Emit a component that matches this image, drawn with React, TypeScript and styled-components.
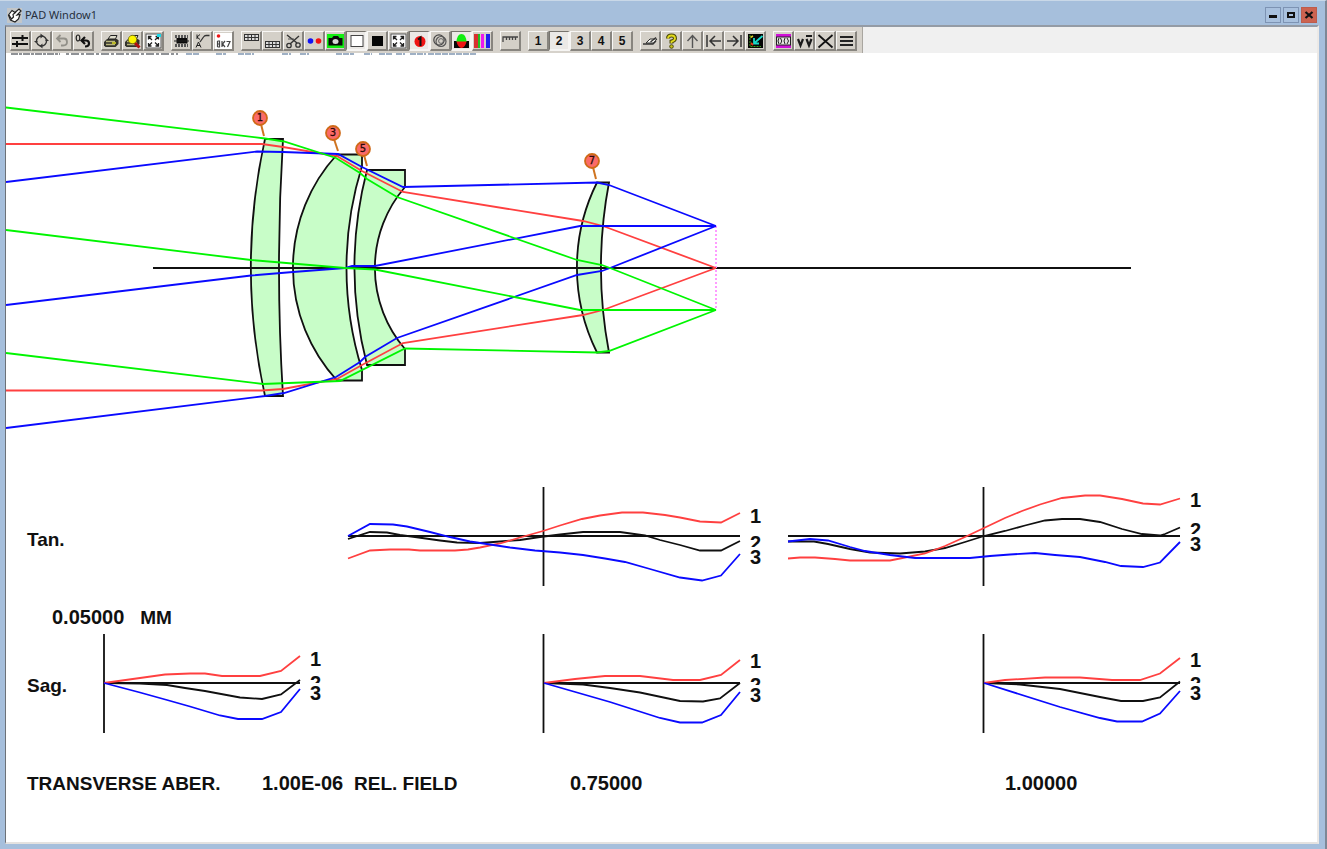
import React from "react";
import styled, { createGlobalStyle } from "styled-components";

const GlobalStyle = createGlobalStyle`
  * { box-sizing: border-box; }
  body { margin: 0; background: #a6bfdc; }
`;

const RED = "#ff4040";
const BLUE = "#0a0aff";
const GREEN = "#00f500";
const BLACK = "#101010";

/* ---------- window chrome ---------- */

const Window = styled.main`
  min-height: 100vh;
  display: flex;
  flex-direction: column;
  padding: 0 6px 5px 5px;
  background: #a6bfdc;
  border-top: 1px solid #c9d8e8;
  border-right: 2px solid #7d8896;
  font-family: "Liberation Sans", Arial, sans-serif;
`;

const TitleBar = styled.header`
  display: flex;
  align-items: center;
  height: 24px;
  padding: 4px 2px 0 2px;
  gap: 3px;
`;

const Title = styled.h1`
  flex: 1;
  margin: 0;
  font: 400 11px/16px "Noto Sans", "Open Sans", sans-serif;
  color: #26303c;
`;

const Caption = styled.div`
  display: flex;
  gap: 2px;
`;

const CaptionButton = styled.button<{ $close?: boolean }>`
  display: grid;
  place-items: center;
  width: 16px;
  height: 16px;
  padding: 0;
  border: 1px solid ${(p) => (p.$close ? "#bd5c4c" : "#7d93b3")};
  background: ${(p) => (p.$close ? "#cc6350" : "#a9c1de")};
`;

const Frame = styled.div`
  flex: 1;
  display: flex;
  flex-direction: column;
  border-top: 2px solid #949ba5;
  border-left: 1px solid #6d7278;
  border-right: 2px solid #ece9e6;
  border-bottom: 2px solid #e4e2e0;
  background: #fff;
`;

const ToolStrip = styled.div`
  display: flex;
  background: #f0f0f0;
`;

const Toolbar = styled.div`
  display: flex;
  gap: 7px;
  height: 26px;
  padding: 4px 5px 2px 4px;
  background: #d6d2cb;
  border-right: 1px solid #a9a6a0;
`;

const ToolGroup = styled.div`
  display: flex;
`;

const ToolButton = styled.button<{ $pressed?: boolean }>`
  display: grid;
  place-items: center;
  width: 21px;
  height: 20px;
  padding: 0;
  color: #111;
  font: 700 12px/16px "Liberation Sans", Arial, sans-serif;
  background: ${(p) => (p.$pressed ? "#ebe9e6" : "#d4d0c8")};
  border-style: solid;
  border-width: 1px 2px 2px 1px;
  border-color: ${(p) =>
    p.$pressed ? "#77746e #f6f5f3 #f6f5f3 #77746e" : "#f8f7f5 #88857f #88857f #f8f7f5"};
`;

const Icon = styled.svg`
  display: block;
  width: 17px;
  height: 16px;
`;

const Fringe = styled.svg`
  display: block;
  width: 480px;
  height: 2px;
`;

/* ---------- plot ---------- */

const Drawing = styled.svg`
  display: block;
  width: 100%;
  height: auto;
  min-width: 0;
`;

const ChartRow = styled.section`
  display: grid;
  grid-template-columns: 324fr 440fr 440fr 107fr;
`;

const LabelCell = styled.div`
  display: grid;
  grid-template-columns: 84fr 240fr;
  align-items: center;
`;

const RowLabel = styled.h2<{ $drop?: boolean }>`
  margin: 0;
  padding: ${(p) => (p.$drop ? "12px" : "2px")} 0 0 21px;
  font-size: 19px;
  line-height: 24px;
  color: ${BLACK};
`;

const Word = styled.span`
  font-size: 19px;
  line-height: 24px;
  font-weight: 700;
  color: ${BLACK};
  white-space: nowrap;
`;

const Value = styled(Word)`
  font-size: 20px;
`;

const ScaleRow = styled.p`
  display: flex;
  align-items: baseline;
  gap: 16px;
  margin: 11px 0 0;
  padding-left: 46px;
`;

const FieldRow = styled.footer`
  display: grid;
  grid-template-columns: 256fr 92fr 216fr 435fr 312fr;
  align-items: baseline;
  margin: 31px 0 24px;
`;

const Lead = styled(Word)`
  padding-left: 21px;
`;

/* ---------- toolbar icons ---------- */

const printer = (
  <>
    <path d="M1 9L4 6H14L15.500 7.500V11L12.500 14H2.500L1 12.500Z" fill="#33332c" />
    <path d="M5 6L7.500 2.500H14L12.500 6Z" fill="#dedccb" stroke="#222" />
    <path d="M3 8.500H12M3 11.500H12" stroke="#b9b57c" strokeWidth="1.300" />
    <path d="M9 10H13" stroke="#d8d820" strokeWidth="1.500" />
  </>
);

const fourArrows = (
  <>
    <rect x="1" y="1" width="15" height="14" fill="#fff" stroke="#555" />
    <path
      d="M7 7L4 4M10 7L13 4M7 9.500L4 12.500M10 9.500L13 12.500M3.500 6.500V3.500H6.500M10.500 3.500H13.500V6.500M3.500 10V13H6.500M10.500 13H13.500V10"
      fill="none"
      stroke="#222"
      strokeWidth="1.300"
    />
  </>
);

const grid = (y: number) => (
  <>
    <rect x="1.500" y={y} width="14" height="6" fill="#ddd" stroke="#333" />
    <path d={`M1.500 ${y + 3}H15.500M5 ${y}V${y + 6}M8.500 ${y}V${y + 6}M12 ${y}V${y + 6}`} stroke="#333" />
  </>
);

const icons: Record<string, React.ReactNode> = {
  "Change lens": (
    <path d="M0 5H16M0 11H16M10.500 2V8M5 8V14" stroke="#111" strokeWidth="2" fill="none" />
  ),
  Refresh: (
    <>
      <circle cx="8.500" cy="8" r="5" fill="none" stroke="#333" strokeWidth="1.400" />
      <path d="M7.500 0.500L10.500 3L7.500 5.500ZM9.500 10.500L6.500 13L9.500 15.500ZM1 8H5L3 10ZM12 8H16L14 6Z" fill="#333" />
    </>
  ),
  Undo: (
    <path d="M3 5.500H10Q13 5.500 13 9Q13 12.500 9 12.500H7M6.500 2L3 5.500L6.500 9" fill="none" stroke="#929089" strokeWidth="1.800" />
  ),
  "Undo all": (
    <>
      <ellipse cx="3" cy="5" rx="1.800" ry="3" fill="none" stroke="#222" strokeWidth="1.200" />
      <path d="M7 7.500H11Q14 7.500 14 10.500Q14 13.500 10 13.500M10 4L6.500 7.500L10 11" fill="none" stroke="#111" strokeWidth="2.200" />
    </>
  ),
  Print: printer,
  "Print preview": (
    <>
      {printer}
      <path d="M10.500 9.500L15.500 14.500" stroke="#b01010" strokeWidth="3" />
      <circle cx="8.500" cy="6.500" r="4.200" fill="#fdf500" stroke="#6d6a10" strokeWidth="0.800" />
    </>
  ),
  "Fit view": (
    <>
      {fourArrows}
      <rect x="12" y="1" width="4" height="3" fill="#18d8e8" />
    </>
  ),
  "Film strip": (
    <>
      <path d="M2 3.500H15M2 12.500H15" stroke="#555" strokeWidth="3" strokeDasharray="2 1" />
      <rect x="3.500" y="5" width="11" height="5.500" fill="#0b0b0b" />
      <path d="M1 8H16" stroke="#222" />
    </>
  ),
  "Ray curve": (
    <>
      <path d="M3 1.500V6M3 4L6 1.500M3 4L6 6.500M2 14.500L4.500 9L7 14.500M3 12.500H6" fill="none" stroke="#222" />
      <path d="M6 9L9.500 4Q10.500 2.500 12 2.500H15.500" fill="none" stroke="#333" strokeWidth="1.300" />
    </>
  ),
  Glass: (
    <>
      <rect width="17" height="16" fill="#fff" />
      <circle cx="3.500" cy="3" r="1.800" fill="#f01818" />
      <path d="M2.500 8V14M2.500 8H4.500V14H2.500M2.500 11H4.500M7 8V14M10 8L7.500 11L10 14M11.500 8.500H15L12.500 14" fill="none" stroke="#444" strokeWidth="1.200" />
    </>
  ),
  "Table above": grid(1.500),
  "Table below": grid(8.500),
  Cut: (
    <>
      <path d="M2 2L12 10M14 3L5 11" stroke="#333" strokeWidth="1.400" />
      <circle cx="4" cy="12.500" r="2.200" fill="none" stroke="#333" strokeWidth="1.300" />
      <circle cx="13" cy="12" r="2.200" fill="none" stroke="#333" strokeWidth="1.300" />
      <path d="M3 6H9" stroke="#555" />
    </>
  ),
  "Two dots": (
    <>
      <circle cx="4.500" cy="8" r="2.800" fill="#1212f5" />
      <circle cx="12.500" cy="8" r="2.800" fill="#f51212" />
    </>
  ),
  Snapshot: (
    <>
      <rect y="1" width="17" height="14" fill="#12ee12" />
      <path d="M1.500 5H5L6.500 3H11L12.500 5H15.500V12.500H1.500Z" fill="#0a0a0a" />
      <ellipse cx="8.500" cy="8.500" rx="3" ry="2.500" fill="#d8d8d8" />
    </>
  ),
  "White background": <rect x="3" y="2.500" width="12" height="11" fill="#fff" stroke="#444" />,
  "Black background": <rect x="3" y="3" width="11" height="10" fill="#050505" />,
  Expand: fourArrows,
  "Surface numbers": (
    <>
      <circle cx="9" cy="8.500" r="5.500" fill="#f01414" />
      <path d="M7 6.500L9.500 4.500V13" fill="none" stroke="#111" strokeWidth="2" />
    </>
  ),
  Rings: (
    <>
      <circle cx="7" cy="7" r="5.200" fill="none" stroke="#444" strokeWidth="1.200" />
      <circle cx="9" cy="8.500" r="5" fill="none" stroke="#555" strokeWidth="1.200" />
      <circle cx="9" cy="8" r="2.400" fill="none" stroke="#666" />
    </>
  ),
  "Fill lens": (
    <>
      <rect x="1" y="8" width="15" height="7" fill="#080808" />
      <path d="M3.500 9Q4 1 8.500 1Q13 1 13.500 9Z" fill="#10ee10" />
      <path d="M3.500 8.500H13.500Q12 15 8.500 15Q5 15 3.500 8.500Z" fill="#f01414" />
    </>
  ),
  Colors: (
    <>
      <rect x="0" y="1" width="4" height="14" fill="#d83030" />
      <rect x="4" y="1" width="2" height="14" fill="#20c020" />
      <rect x="7" y="1" width="3" height="14" fill="#ee18ee" />
      <rect x="12" y="1" width="4" height="14" fill="#2020f0" />
    </>
  ),
  Scale: <path d="M1 9V4H16M4.500 4V7M7.500 4V7M10.500 4V7M13.500 4V7" fill="none" stroke="#444" strokeWidth="1.300" />,
  Eraser: (
    <>
      <path d="M4 10L8 6H15L11.500 10Z" fill="#f4f4f0" stroke="#333" />
      <path d="M1 11H11L14 8M8.500 9L14 4.500" fill="none" stroke="#333" strokeWidth="1.300" />
    </>
  ),
  Help: (
    <>
      <path d="M5 5.500Q5 2.500 8.500 2.500Q12 2.500 12 5.500Q12 7.500 8.500 8.500V10.500" fill="none" stroke="#4c4a08" strokeWidth="4" />
      <path d="M5 5.500Q5 2.500 8.500 2.500Q12 2.500 12 5.500Q12 7.500 8.500 8.500V10" fill="none" stroke="#e2da1c" strokeWidth="1.800" />
      <circle cx="8.500" cy="13.500" r="1.800" fill="#c8c018" stroke="#4c4a08" />
    </>
  ),
  Up: <path d="M8.500 15V3M3.500 8L8.500 2.500L13.500 8" fill="none" stroke="#555" strokeWidth="1.400" />,
  First: <path d="M2 2V14M16 8H5M10 3L5 8L10 13" fill="none" stroke="#333" strokeWidth="1.500" />,
  Last: <path d="M15 2V14M1 8H12M7 3L12 8L7 13" fill="none" stroke="#333" strokeWidth="1.500" />,
  Optimize: (
    <>
      <rect x="1" y="1" width="15" height="14" fill="#050505" />
      <path d="M15.500 3L8 9.500M7 5V10.500H12" fill="none" stroke="#18d8c8" strokeWidth="1.800" />
      <path d="M3 2V13.500H14" fill="none" stroke="#38a018" strokeDasharray="2 1" />
      <path d="M4 10L6 12" stroke="#e83818" strokeWidth="2" />
      <path d="M3.500 4.500L6 3" stroke="#d8d020" strokeWidth="1.500" />
    </>
  ),
  Layout: (
    <>
      <rect x="1" y="1" width="15" height="14" fill="#d010d8" />
      <rect x="1.500" y="4" width="14" height="8" fill="#e4e2e0" stroke="#222" />
      <path d="M4 5Q2 8 4 11M5.500 5Q8 8 5.500 11M10 5Q8 8 10 11M12 5Q15 8 12 11" fill="none" stroke="#222" />
    </>
  ),
  Variables: (
    <path d="M2 6L4.500 12.500L7 6M10.500 6L13 12.500L15.500 6M10 3H16" fill="none" stroke="#1a1a1a" strokeWidth="2.200" />
  ),
  Close: <path d="M1.500 2L15.500 14.500M15.500 2L1.500 14.500" stroke="#111" strokeWidth="1.700" />,
  Menu: <path d="M2 4H15M2 8H15M2 12H15" stroke="#222" strokeWidth="2" />,
};

const toolGroups: string[][] = [
  ["Change lens", "Refresh", "Undo", "Undo all"],
  ["Print", "Print preview", "Fit view"],
  ["Film strip", "Ray curve", "Glass"],
  [
    "Table above", "Table below", "Cut", "Two dots", "Snapshot", "White background",
    "Black background", "Expand", "Surface numbers", "Rings", "Fill lens", "Colors",
  ],
  ["Scale"],
  ["1", "2", "3", "4", "5"],
  ["Eraser", "Help", "Up", "First", "Last", "Optimize"],
  ["Layout", "Variables", "Close", "Menu"],
];

const pressed = new Set(["White background", "Surface numbers", "Fill lens", "2"]);

/* ---------- lens drawing ---------- */

const lenses = [
  "M265 139A597 597 0 0 0 265 396H283A2062 2062 0 0 1 283 139Z",
  "M337 154.500A167 167 0 0 0 337 380.500H362V370A343 343 0 0 1 362 166V154.500Z",
  "M367 170A390 390 0 0 0 367 365H405V349A124 124 0 0 1 405 187V170Z",
  "M597 182.500A190 190 0 0 0 597 352.500H609A456 456 0 0 1 609 182.500Z",
];

const rays: [string, string][] = [
  [RED, "6,144 262,144 283,147 337,156 362,171 403,192 583,221 603,226 716,268"],
  [RED, "6,390.5 262,390.5 283,389 337,379 362,365 403,343 583,315 603,310 716,268"],
  [BLUE, "6,182 257,151.5 283,152 338,154 362,167 403,187 597,182.5 609,185 716,226"],
  [BLUE, "6,305 251,275.5 293,272 345,268 352,266 375,266 580,226 716,226"],
  [BLUE, "6,428 265,396 284,393 336,377 360,362 365,357 397,338 577,275 602,271 610,268 716,226"],
  [GREEN, "6,107.5 265,138.5 284,141.5 336,158 360,173 367,179 397,197 577,260 602,265 610,268 716,310"],
  [GREEN, "6,230 251,260 345,268 375,269.5 580,310 716,310"],
  [GREEN, "6,353 263,384 340,381 405,348.5 597,352.5 609,351 716,310"],
];

const markers = [
  { n: "1", x: 260, y: 118, tx: 264, ty: 136 },
  { n: "3", x: 333, y: 133, tx: 338, ty: 151 },
  { n: "5", x: 363, y: 149, tx: 367, ty: 166 },
  { n: "7", x: 592, y: 161, tx: 596, ty: 179 },
];

const LensDrawing = () => (
  <Drawing viewBox="6 55 1311 419" role="img" aria-label="Lens layout with ray trace">
    {lenses.map((d) => (
      <path key={d} d={d} fill="#c8fdc8" stroke={BLACK} strokeWidth="1.800" />
    ))}
    <path d="M153 268H1131" stroke={BLACK} strokeWidth="2" />
    <path d="M716 226V310" stroke="#ff9cff" strokeWidth="2" strokeDasharray="2 2" />
    {rays.map(([color, points]) => (
      <polyline key={points} points={points} fill="none" stroke={color} strokeWidth="1.800" />
    ))}
    {markers.map((m) => (
      <g key={m.n}>
        <path d={`M${m.x + 1} ${m.y + 6}L${m.tx} ${m.ty}`} stroke="#cf7420" strokeWidth="2" />
        <circle cx={m.x} cy={m.y} r="7" fill="#fb6a68" stroke="#cf6a18" strokeWidth="1.800" />
        <text x={m.x} y={m.y + 3} textAnchor="middle" fontFamily="DejaVu Sans, sans-serif" fontSize="10" fontWeight="400" fill="#2a0a08" stroke="#2a0a08" strokeWidth="0.300">
          {m.n}
        </text>
      </g>
    ))}
  </Drawing>
);

/* ---------- aberration charts ---------- */

type ChartProps = {
  name: string;
  view: string;
  axes: string;
  red: string;
  black: string;
  blue: string;
  labelX: number;
  labels: [number, number, number];
};

const Chart = ({ name, view, axes, red, black, blue, labelX, labels }: ChartProps) => (
  <Drawing viewBox={view} role="img" aria-label={name}>
    <path d={axes} stroke={BLACK} strokeWidth="1.800" fill="none" />
    {[[BLACK, black], [RED, red], [BLUE, blue]].map(([color, points]) => (
      <polyline key={color} points={points} fill="none" stroke={color} strokeWidth="1.800" />
    ))}
    {labels.map((y, i) => (
      <g key={i}>
        <rect x={labelX - 1} y={y - 17} width="14" height="19" fill="#fff" />
        <text x={labelX} y={y} fontFamily="Liberation Sans, Arial, sans-serif" fontSize="20" fontWeight="700" fill={BLACK}>
          {i + 1}
        </text>
      </g>
    ))}
  </Drawing>
);

const tangential: ChartProps[] = [
  {
    name: "Tangential, field 0.75",
    view: "330 474 440 120",
    axes: "M348 536H740M543.500 487V586",
    red: "348,558.5 370,550.5 390,549.5 409,549.5 420,550.5 455,550.5 468,549.5 480,547.5 500,543.5 520,537.5 543,531 560,525.5 582,519 600,515.5 622,512.5 643,512.5 665,515 680,517.5 700,521.5 721,522.5 740,513",
    black: "348,539 370,532 387,532.5 400,535 415,537 440,540.5 457,542.5 480,543 500,541.5 520,540 540,537 560,534.5 583,532 620,532 645,535.5 660,540 680,545 700,550.5 721,550.5 740,541",
    blue: "348,536 370,524 393,524.5 407,526.5 430,532 450,537 470,541.5 490,544.5 510,547.5 535,550.5 560,552.5 583,555 605,558.5 625,562 650,569 680,577.5 702,580.5 721,575.5 740,554",
    labelX: 750,
    labels: [523, 550, 564],
  },
  {
    name: "Tangential, field 1.00",
    view: "770 474 440 120",
    axes: "M788 536H1180M983.500 487V586",
    red: "788,558.5 800,557.5 815,557.5 835,559 850,560.5 890,560.5 905,557.5 925,553.5 945,546 965,537 984,528 1005,518 1022,511 1040,504.5 1062,498 1085,495.5 1100,495.5 1122,499 1143,503.5 1160,504.5 1180,498.5",
    black: "788,541.5 814,541.5 828,544 850,549 870,552.5 900,553.5 925,551.5 945,548 965,542 984,536 1005,531 1025,525.5 1045,520.5 1062,519 1080,519 1100,522 1122,529 1142,534 1160,535.5 1165,534 1180,527.5",
    blue: "788,541.5 810,539 828,540.5 850,547 865,551 890,555 915,558 970,558 990,556 1010,554.5 1035,553 1055,555 1080,557 1105,562 1121,566 1143,567 1160,562.5 1180,542",
    labelX: 1190,
    labels: [507, 537, 551],
  },
];

const sagittal: ChartProps[] = [
  {
    name: "Sagittal, on axis",
    view: "90 630 240 110",
    axes: "M104 683H300M104 634V733",
    red: "104,683 140,678 165,674.5 190,673.5 205,673.5 222,676 260,676 281,671 300,656",
    black: "104,683 140,683.5 167,685 185,688 205,691 240,697.5 262,699 281,694.5 300,680",
    blue: "104,683 140,692.5 167,700 190,706.5 220,715.5 238,719 262,719 281,712 300,689",
    labelX: 310,
    labels: [666, 690, 700],
  },
  {
    name: "Sagittal, field 0.75",
    view: "330 630 440 110",
    axes: "M544 683H740M543.500 634V733",
    red: "544,683 575,679 605,676 640,676 673,680 700,680 721,675 740,660",
    black: "544,683 583,684.5 610,688 640,692.5 680,701 703,701.5 720,698.5 740,683",
    blue: "544,683 610,702 660,718 680,722.5 702,722.5 721,715 740,692",
    labelX: 750,
    labels: [668, 692, 702],
  },
  {
    name: "Sagittal, field 1.00",
    view: "770 630 440 110",
    axes: "M984 683H1180M983.500 634V733",
    red: "984,683 1005,680 1045,677.5 1080,677.5 1112,680 1140,680 1160,673.5 1180,658",
    black: "984,683 1020,684.5 1060,689 1100,697 1121,701 1143,701 1160,697.5 1180,681.5",
    blue: "984,683 1060,707 1100,718 1117,721.5 1142,721.5 1160,713.5 1180,691",
    labelX: 1190,
    labels: [667, 691, 700],
  },
];

export default function App() {
  return (
    <>
      <GlobalStyle />
      <Window>
        <TitleBar>
          <svg width="15" height="15" viewBox="0 0 15 15" aria-hidden="true">
            <rect width="15" height="15" fill="#c3c6c8" />
            <path d="M1.500 7L5 2.500L8 4.500L12 1L14 3L10 7L13 6.500L11.500 11L8 14L3.500 12Z" fill="#fff" stroke="#222" strokeWidth="1.200" />
            <path d="M2 7L4.500 11L6.500 9L6 6.500L9 4" fill="none" stroke="#222" strokeWidth="1.200" />
          </svg>
          <Title>PAD Window1</Title>
          <Caption>
            <CaptionButton aria-label="Minimize">
              <svg width="14" height="14"><path d="M3 8.500H11" stroke="#111" strokeWidth="3" /></svg>
            </CaptionButton>
            <CaptionButton aria-label="Maximize">
              <svg width="14" height="14"><rect x="4" y="5" width="6" height="4" fill="none" stroke="#111" strokeWidth="2" /></svg>
            </CaptionButton>
            <CaptionButton $close aria-label="Close window">
              <svg width="14" height="14"><path d="M3.500 4L10.500 10M10.500 4L3.500 10" stroke="#111" strokeWidth="2.200" /></svg>
            </CaptionButton>
          </Caption>
        </TitleBar>
        <Frame>
          <ToolStrip>
            <Toolbar role="toolbar" aria-label="Drawing tools">
              {toolGroups.map((group) => (
                <ToolGroup key={group[0]}>
                  {group.map((name) => (
                    <ToolButton key={name} $pressed={pressed.has(name)} aria-pressed={pressed.has(name)} aria-label={name}>
                      {icons[name] ? <Icon viewBox="0 0 17 16">{icons[name]}</Icon> : name}
                    </ToolButton>
                  ))}
                </ToolGroup>
              ))}
            </Toolbar>
          </ToolStrip>
          <Fringe viewBox="0 0 480 2" preserveAspectRatio="none" aria-hidden="true">
            <path d="M5 1H54" stroke="#8f9296" strokeWidth="2" strokeDasharray="7 1 3 1" />
            <path d="M60 1H172" stroke="#8f9296" strokeWidth="2" strokeDasharray="3 2 8 2" />
            <path d="M180 1H194M210 1H220M232 1H248M276 1H285M294 1H303M330 1H348M358 1H366M373 1H387M390 1H399M404 1H420M422 1H470" stroke="#9fb0c4" strokeWidth="2" strokeDasharray="6 1" />
          </Fringe>
          <LensDrawing />
          <ChartRow>
            <LabelCell><RowLabel $drop>Tan.</RowLabel></LabelCell>
            {tangential.map((c) => <Chart key={c.name} {...c} />)}
          </ChartRow>
          <ScaleRow>
            <Value>0.05000</Value>
            <Word>MM</Word>
          </ScaleRow>
          <ChartRow>
            <LabelCell>
              <RowLabel>Sag.</RowLabel>
              <Chart {...sagittal[0]} />
            </LabelCell>
            {sagittal.slice(1).map((c) => <Chart key={c.name} {...c} />)}
          </ChartRow>
          <FieldRow>
            <Lead>TRANSVERSE ABER.</Lead>
            <Value>1.00E-06</Value>
            <Word>REL. FIELD</Word>
            <Value>0.75000</Value>
            <Value>1.00000</Value>
          </FieldRow>
        </Frame>
      </Window>
    </>
  );
}
